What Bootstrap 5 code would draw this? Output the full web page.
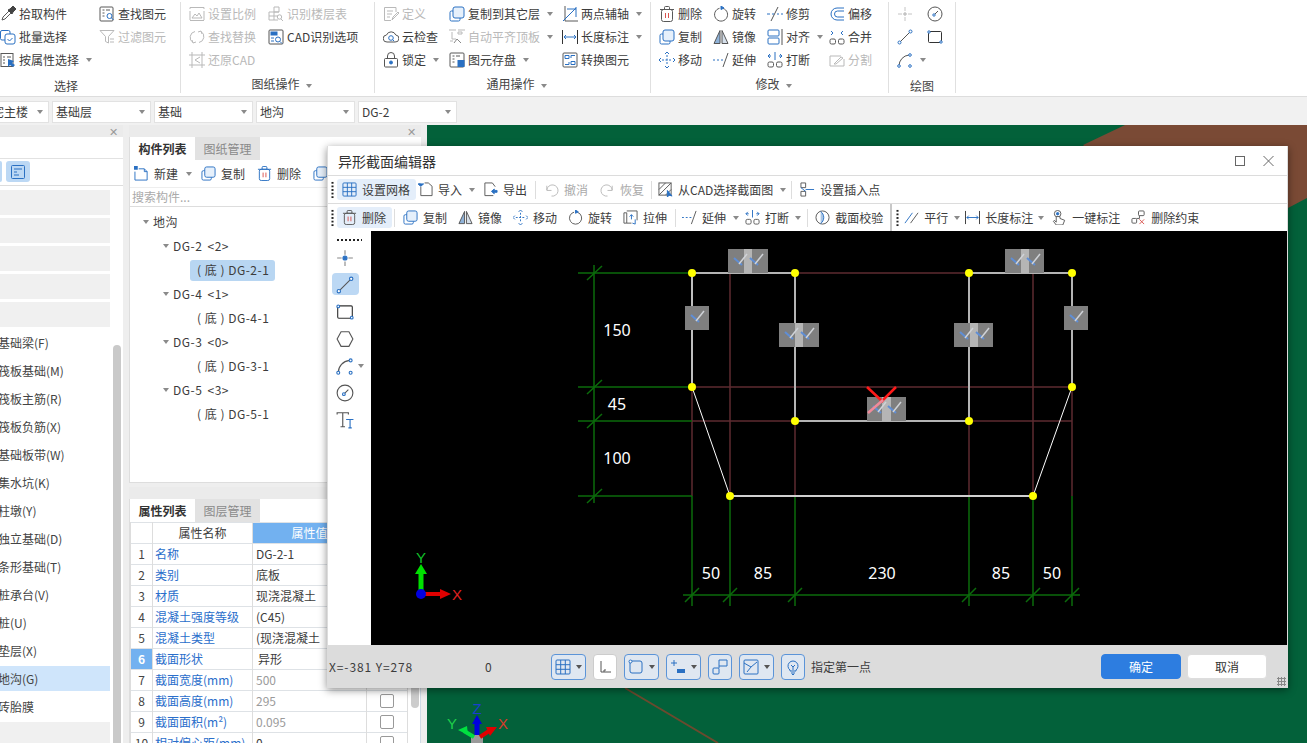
<!DOCTYPE html>
<html lang="zh-CN">
<head>
<meta charset="UTF-8">
<title>异形截面编辑器</title>
<link href="https://cdn.jsdelivr.net/npm/bootstrap@5.3.0/dist/css/bootstrap.min.css" rel="stylesheet">
<style>
html,body{margin:0;height:100%;overflow:hidden}
body{font-family:"Noto Sans CJK SC","Liberation Sans",sans-serif;font-size:12px;line-height:1;color:#3c3c3c;background:#eee}
.app{position:relative;width:1307px;height:743px;overflow:hidden}
.ic{width:16px;height:16px;flex:none;fill:none;stroke:currentColor;stroke-width:1;color:#595959}
.dis,.dis .ic{color:#b9b9b9}
.crt{display:inline-block;flex:none;width:0;height:0;border-left:3px solid transparent;border-right:3px solid transparent;border-top:4px solid #8a8a8a}

/* ribbon */
.rib{height:97px;background:#fff;border-bottom:1px solid #ddd}
.rgrp{height:91px;margin-top:2px;border-right:1px solid #e0e0e0;padding-left:8px;flex:none}
.rgrid{display:grid;grid-auto-rows:23px;align-items:center}
.ritem{display:flex;align-items:center;gap:3px;white-space:nowrap}
.ritem .crt{margin-left:4px}
.rlab{text-align:center;padding-top:7px;color:#444}
.rlab .crt{margin-left:6px;vertical-align:middle}
.g1{width:181px;padding-left:0}.g1 .rgrid{grid-template-columns:99px 1fr}.g1 .rlab{padding-right:48px;padding-top:9px}
.g2{width:194px}.g2 .rgrid{grid-template-columns:79px 1fr}
.g3{width:276px}.g3 .rgrid{grid-template-columns:66px 113px 1fr}
.g4{width:238px}.g4 .rgrid{grid-template-columns:54px 54px 62px 1fr}
.g5{width:67px}.g5 .rgrid{grid-template-columns:30px 30px}.g5 .rlab{padding-top:9px;padding-right:8px}

.selbar{height:28px;background:#f1f1f1;gap:3px;padding-top:4px}
.selbox{height:22px;width:99px;background:#fff;border:1px solid #e2e2e2;display:flex;align-items:center;justify-content:space-between;padding:0 5px 0 3px;font-size:12px;overflow:hidden;flex:none}
.selbox.first{width:49px;border-left:0;padding-left:0}
.selbox.first span{margin-left:-8px;white-space:nowrap}

/* panels */
.mainrow{height:618px}
.strip{height:12px;background:#ebebeb;display:flex;justify-content:flex-end;padding-right:5px;color:#999;font-size:11px;align-items:center}
.leftp{width:123px;background:#fff;flex:none}
.ltbar{height:49px;padding:25px 0 0 0;border-bottom:1px solid #ddd;background:#fff;position:relative;display:flex;gap:4px}
.ltbar::before{content:"";position:absolute;left:0;right:0;top:21px;border-top:1px solid #e2e2e2}
.lact{width:24px;height:21px;margin-top:-1px;background:#bcd8f4;border-radius:3px;display:flex;align-items:center;justify-content:center}
.lact.cut{width:2px;border-radius:0 3px 3px 0}
.lact .ic{color:#2a70c2}
.llist{width:110px;padding-top:4px;flex:none}
.lrow{height:25px;margin-bottom:3px;display:flex;align-items:center;white-space:nowrap;overflow:hidden;color:#444}
.lrow span{margin-left:-2px}
.lrow.ph{background:#f0f0f0}
.lrow.on{background:#cfe5fb}
.lscroll{width:8px;margin:159px 0 0 3px;height:460px;background:#c9c9c9;border-radius:4px 4px 0 0;flex:none}
.midp{width:292px;margin:0 6px;flex:none}
.tabs{height:23px;background:#fff;border-left:1px solid #ddd}
.tabx{width:65px;height:23px;display:flex;align-items:center;justify-content:center;font-size:12px}
.tabx.act{font-weight:700;color:#333;background:#fff}
.tabx.off{background:#e2e2e2;color:#8a8a8a}
.treep{height:323px;background:#fff;border:1px solid #ddd;border-top:0}
.ttool{height:27px;display:flex;align-items:center;padding-left:4px;white-space:nowrap;overflow:hidden}
.ttool .ic{color:#2a70c2}
.tsearch{height:20px;border-top:1px solid #eee;border-bottom:1px solid #ddd;display:flex;align-items:center;padding-left:2px;color:#aaa}
.tnode{height:24px;display:flex;align-items:center;gap:4px;white-space:nowrap;font-size:12px;letter-spacing:.5px}
.l0{padding-left:13px}.l1{padding-left:33px;word-spacing:2px}.l2{padding-left:60px}
.tsel{width:85px;height:21px;display:flex;align-items:center;background:#b8d6f2;border-radius:3px}
.tsel span,.l2 span{padding-left:7px;white-space:pre}
.treelist{padding-top:3px}
.prop{margin-top:4px;height:256px;background:#fff;overflow:hidden}
.proprow{height:221px;background:#fff;border-left:1px solid #ddd;border-right:1px solid #cfdbe6}
table.ptb{width:277px;table-layout:fixed;margin:0;font-size:12px;--bs-table-color:#3c3c3c}
table.ptb th,table.ptb td{height:21px;padding:0 3px;vertical-align:middle;border-color:#ddd;white-space:nowrap;overflow:hidden;line-height:1}
table.ptb th{font-weight:400;text-align:center}
.pc1{width:22px}.pc2{width:100px}.pc3{width:114px}.pc4{width:41px}
.th-blue{--bs-table-bg:#72b1f0;color:#fff!important}
.cnum{text-align:center;color:#444}
.cnum.on{--bs-table-bg:#72b1f0;color:#fff!important;font-weight:700}
table.ptb td.cname{color:#2a6ecb!important;padding-left:2px}
.cgrey{color:#9b9b9b!important}
.cedit{box-shadow:inset 0 0 0 1px #5b9bd5;padding-left:5px!important}
.cck{text-align:center}
.cck .form-check-input{margin:0;width:14px;height:14px;vertical-align:middle;border-color:#999;border-radius:2px}
.pscroll{width:8px;height:148px;margin:38px 0 0 3px;background:#ccc;border-radius:4px;flex:none}
.canv{flex:1 1 auto;background:#03613a;overflow:hidden}
.canv svg{display:block}

/* dialog */
.dlg{position:absolute;left:327px;top:146px;width:961px;height:542px;background:#dcdcdc;box-shadow:0 2px 8px rgba(0,0,0,.45);display:flex;flex-direction:column;padding:0 1px 0 1px}
.dtitle{height:29px;background:#fff;display:flex;align-items:center;padding-left:10px;font-size:14px;color:#333;flex:none}
.dbtns{margin-left:auto;display:flex;gap:18px;padding-right:13px}
.dtb{height:27px;background:#fff;display:flex;align-items:center;white-space:nowrap;flex:none;padding-left:3px}
.dtb1{margin-top:1px}
.dtb2{margin-top:1px}
.grip{width:3px;height:18px;flex:none;background-image:radial-gradient(circle,#222 1px,transparent 1.2px);background-size:3px 3.6px}
.ti{display:flex;align-items:center;gap:5px;flex:none}
.ti .ic{width:15px;height:15px}
.ti.on{background:#e4eefa;border-radius:3px;padding:0 6px 0 5px;height:21px}
.dis.ti{color:#aaa}
.vs{width:1px;height:18px;background:#ddd;flex:none}
.vs2{width:2px;height:27px;background:#c8c8c8;flex:none}
.ml2{margin-left:2px}.ml3{margin-left:3px}.ml4{margin-left:4px}.ml5{margin-left:5px}.ml6{margin-left:6px}.ml7{margin-left:7px}.ml8{margin-left:8px}.ml9{margin-left:9px}.ml11{margin-left:11px}.ml12{margin-left:12px}
.dbody{height:414px;flex:none}
.tcol{width:43px;background:#fff;flex:none;padding-top:8px}
.tdots{width:26px;height:2px;margin:0 0 3px 8px;background-image:radial-gradient(circle,#222 1px,transparent 1.1px);background-size:4px 2px}
.tc{height:27px;display:flex;align-items:center;justify-content:center;position:relative}
.tc.on::before{content:"";position:absolute;left:4px;top:2px;width:27px;height:22px;background:#bcd8f4;border-radius:4px}
.tc .ic{position:relative;margin-right:9px;width:18px;height:18px}
.tc .crt{position:absolute;left:30px;top:12px}
.dcad{display:block;background:#000}
.dstat{height:43px;display:flex;align-items:center;flex:none;padding-left:1px;padding-right:20px;color:#3c3c3c}
.scoord{width:156px;letter-spacing:.9px}
.szero{width:66px}
.sb{height:26px;display:flex;align-items:center;justify-content:center;gap:5px;border:1px solid #5b94d8;border-radius:4px;background:#dfe7f1;flex:none}
.sb .ic{color:#2a70c2}
.sb.wh{background:#fff;border-color:#ccc}.sb.wh .ic{color:#555}
.sb .crt{border-top-color:#555}
.w35{width:35px}.w24{width:24px}
.sbs{gap:7px}
.dbtn.btn{width:80px;height:25px;padding:0;font-size:12px;border-radius:4px;line-height:1}
.dbtn.btn-primary{--bs-btn-bg:#2d7de0;--bs-btn-border-color:#2d7de0}
.dbtn.btn-light{--bs-btn-bg:#fff;--bs-btn-border-color:#ddd;color:#333;margin-left:6px}
.rgrip{position:absolute;right:2px;bottom:2px;width:9px;height:9px;background-image:radial-gradient(circle,#888 1px,transparent 1.1px);background-size:3px 3px}
</style>
</head>
<body>
<svg class="d-none">
<symbol id="i-pick" viewBox="0 0 16 16"><path d="M2 14l1-3 6-6 2 2-6 6z"/><path d="M8 4l2-1 3-3 3 3-3 3-1 2z" fill="#444" stroke="#444"/></symbol>
<symbol id="i-batch" viewBox="0 0 16 16"><g stroke="#2a70c2"><path d="M5 11H2a1.500 1.500 0 0 1-1.500-1.500V3A1.500 1.500 0 0 1 2 1.500h6.500A1.500 1.500 0 0 1 10 3v2"/><rect x="5" y="5" width="10" height="10" rx="2"/><path d="M7.500 10l2 2 3-3"/></g></symbol>
<symbol id="i-attr" viewBox="0 0 16 16"><rect x="1" y="1.500" width="12" height="13"/><path d="M3 5h2M7 5h4M3 8h2M3 11h2"/><path d="M8 7v8l2-2 3 2 2-2-3-2 2-2z" fill="#2a70c2" stroke="none"/></symbol>
<symbol id="i-find" viewBox="0 0 16 16"><rect x="1" y="1" width="13" height="14" rx="1"/><path d="M3.500 4h2M7 4h4M3.500 7h2M3.500 10h2"/><g stroke="#2a70c2"><circle cx="10.500" cy="10" r="2.500" fill="#fff"/><path d="M12.500 12l2 2"/></g></symbol>
<symbol id="i-filter" viewBox="0 0 16 16"><path d="M1 1.500h14l-5.500 6v6.500l-3-1.500v-5z"/><path d="M11 10h4M11 13h4"/></symbol>
<symbol id="i-scale" viewBox="0 0 16 16"><path d="M1 3V1.500h14V3M1 14v-9M15 14V5M1 14.500h14"/><path d="M3 12l3-4 2 2 2-3 3 5z"/></symbol>
<symbol id="i-rep" viewBox="0 0 16 16"><path d="M6 2.500a6 6 0 0 0-2 11M10 13.500a6 6 0 0 0 2-11M3 11l1 3 3-1M13 5l-1-3-3 1"/></symbol>
<symbol id="i-res" viewBox="0 0 16 16"><path d="M0 3h16M0 13h16M3 0v16M13 0v16M11 5L6 8l5 3"/></symbol>
<symbol id="i-floor" viewBox="0 0 16 16"><path d="M6 1h5v5H6zM1 6h10M1 6v8h9M1 10h9M6 6v8"/><circle cx="11.500" cy="11" r="2.200"/><path d="M13 13l2 2"/></symbol>
<symbol id="i-cad" viewBox="0 0 16 16"><rect x="1" y="1" width="14" height="14" rx="1" stroke="#555"/><rect x="2.500" y="2.500" width="7" height="4" fill="#2a70c2" stroke="none"/><g stroke="#2a70c2"><circle cx="10" cy="10.500" r="2.500"/><path d="M12 12.500l2 2M3 9h3M3 12h3"/></g></symbol>
<symbol id="i-def" viewBox="0 0 16 16"><path d="M13 6V1.500H1.500v13H8M4 5h6M4 8h5M4 11h3M9 14l1-3 5-5 1 1-5 5z"/></symbol>
<symbol id="i-cloud" viewBox="0 0 16 16"><path d="M4 13a3.500 3.500 0 0 1-.5-7A5 5 0 0 1 12.800 6 3.500 3.500 0 0 1 12 13z" stroke="#555"/><g stroke="#2a70c2"><circle cx="8" cy="9" r="2.300"/><path d="M9.700 10.700l1.500 1.500"/></g></symbol>
<symbol id="i-lock" viewBox="0 0 16 16"><rect x="1.500" y="6.500" width="13" height="8.500" rx="1" stroke="#555"/><path d="M4.500 6.500V4a3.500 3.500 0 0 1 7 0v2.500" stroke="#555"/><circle cx="8" cy="10.500" r="1.500" fill="#2a70c2" stroke="#2a70c2"/></symbol>
<symbol id="i-copy" viewBox="0 0 16 16"><g stroke="#2a70c2"><path d="M4 5H2.500A1.500 1.500 0 0 0 1 6.500v7A1.500 1.500 0 0 0 2.500 15h7a1.500 1.500 0 0 0 1.500-1.500V12"/><rect x="4" y="1" width="11" height="11" rx="2" fill="#e6f0fb"/></g></symbol>
<symbol id="i-align" viewBox="0 0 16 16"><path d="M0 1h7M9 1h7M3 3v7h4M9 3h4v2h-4zM1 12h3"/><path d="M5 14l3-4 4 4" stroke="#888"/></symbol>
<symbol id="i-save" viewBox="0 0 16 16"><rect x="1" y="1" width="14" height="14" rx="1"/><path d="M3.500 4h2M7 4h4M3.500 7h2M3.500 10h2"/><rect x="9" y="8.500" width="6" height="6" fill="#2a70c2" stroke="#2a70c2"/></symbol>
<symbol id="i-axis" viewBox="0 0 16 16"><path d="M3 0v15h13"/><path d="M1 15L14 2M14 1v10M5 3h9" stroke="#2a70c2"/></symbol>
<symbol id="i-len" viewBox="0 0 16 16"><path d="M.500 1v14M15.500 1v14" stroke="#333"/><path d="M2 8h12M4 6L2 8l2 2M12 6l2 2-2 2" stroke="#2a70c2"/></symbol>
<symbol id="i-conv" viewBox="0 0 16 16"><rect x="1" y="1" width="14" height="14" rx="1"/><path d="M3 3.500h4v3H3zM9 9.500h4v3H9zM9 6V3.500h4M7 10v2.500H3" stroke="#2a70c2"/></symbol>
<symbol id="i-del" viewBox="0 0 16 16"><rect x="2.500" y="3.500" width="11" height="12" rx="2"/><path d="M1 3.500h14M5.500 3.500v-2a1 1 0 0 1 1-1h3a1 1 0 0 1 1 1v2"/><path d="M6.500 7v5M9.500 7v5" stroke="#d9534f"/></symbol>
<symbol id="i-rot" viewBox="0 0 16 16"><path d="M6.500 2.300a6.500 6.500 0 1 0 3.500.1"/><path d="M8 0l3 2-3 1.500z" fill="#2a70c2" stroke="#2a70c2"/></symbol>
<symbol id="i-trim" viewBox="0 0 16 16"><path d="M4 15L11 1" stroke="#555"/><path d="M0 8h3M5 8h2M10 8h2M14 8h2" stroke="#2a70c2"/></symbol>
<symbol id="i-off" viewBox="0 0 16 16"><path d="M15 2H8a5.500 5.500 0 0 0 0 12h7M15 5H8.500a2.500 2.500 0 0 0 0 6H15" stroke="#2a70c2"/></symbol>
<symbol id="i-mir" viewBox="0 0 16 16"><path d="M7 1.500L1 14.500h6z" fill="#8fb2d8" stroke="#555"/><path d="M9 1.500l6 13H9z" fill="#d5dfea" stroke="#555"/></symbol>
<symbol id="i-ali" viewBox="0 0 16 16"><g stroke="#2a70c2"><rect x="1" y="1" width="11" height="6" rx="1"/><rect x="1" y="9" width="11" height="6" rx="1"/></g><path d="M15 0v16" stroke="#555"/></symbol>
<symbol id="i-merge" viewBox="0 0 16 16"><rect x="1" y="10" width="5.500" height="5" rx="1.500"/><rect x="9.500" y="10" width="5.500" height="5" rx="1.500"/><path d="M2 2l2 2-2 2M14 2l-2 2 2 2" stroke="#2a70c2"/></symbol>
<symbol id="i-move" viewBox="0 0 16 16"><g stroke="#2a70c2"><path d="M8 3v10M3 8h10" stroke-dasharray="2 1.500"/><path d="M6 2l2-2 2 2M6 14l2 2 2-2M2 6L0 8l2 2M14 6l2 2-2 2"/></g></symbol>
<symbol id="i-ext" viewBox="0 0 16 16"><path d="M0 8h2M4 8h2M8 8h2" stroke="#2a70c2"/><path d="M10 15l5-14"/></symbol>
<symbol id="i-brk" viewBox="0 0 16 16"><rect x="1" y="10" width="5.500" height="5" rx="1.500"/><rect x="9.500" y="10" width="5.500" height="5" rx="1.500"/><path d="M1 4h3M3 2L1 4l2 2M15 4h-3M13 2l2 2-2 2M8 0v8" stroke="#2a70c2"/></symbol>
<symbol id="i-split" viewBox="0 0 16 16"><path d="M12 4H1v10h14V7M5 12l7-7 2 1-7 6z"/></symbol>
<symbol id="i-pt" viewBox="0 0 16 16"><path d="M1 8h4M11 8h4M8 1v4M8 11v4" stroke="#888"/><circle cx="8" cy="8" r="1.800" fill="#2a70c2" stroke="#2a70c2"/></symbol>
<symbol id="i-pt2" viewBox="0 0 16 16"><path d="M1 8h4M11 8h4M8 1v4M8 11v4" stroke="#c4c4c4"/><circle cx="8" cy="8" r="1.300" fill="#c4c4c4" stroke="#c4c4c4"/></symbol>
<symbol id="i-line" viewBox="0 0 16 16"><path d="M3 13L13 3" stroke="#555"/><g stroke="#2a70c2" fill="#fff"><circle cx="2.500" cy="13.500" r="1.500"/><circle cx="13.500" cy="2.500" r="1.500"/></g></symbol>
<symbol id="i-rect" viewBox="0 0 16 16"><rect x="1.500" y="2.500" width="13" height="11" rx="1" stroke="#333"/><g fill="#fff" stroke="#2a70c2"><circle cx="2" cy="3" r="1.200"/><circle cx="14" cy="13" r="1.200"/></g></symbol>
<symbol id="i-hex" viewBox="0 0 16 16"><path d="M1 8l3.500-6.500h7L15 8l-3.500 6.500h-7z" stroke="#555"/></symbol>
<symbol id="i-arc" viewBox="0 0 16 16"><path d="M2 14A11 11 0 0 1 12 3" stroke="#555"/><g stroke="#2a70c2" fill="#fff"><circle cx="2" cy="14" r="1.300"/><circle cx="13" cy="3" r="1.300"/><circle cx="13" cy="14" r="1.300"/></g></symbol>
<symbol id="i-circ" viewBox="0 0 16 16"><circle cx="8" cy="8" r="7" stroke="#555"/><path d="M7 9l4-4" stroke="#555"/><circle cx="7" cy="9" r="1.200" stroke="#2a70c2" fill="#fff"/></symbol>
<symbol id="i-text" viewBox="0 0 16 16"><path d="M1 3V1.500h10V3M6 1.500V14M4 14h4" stroke="#555"/><path d="M9 7.500h6.500M12.500 7.500V15M11 15h3" stroke="#2a70c2"/></symbol>
<symbol id="i-grid" viewBox="0 0 16 16"><g stroke="#2a70c2"><rect x="1" y="1" width="14" height="14" rx="1"/><path d="M1 5.700h14M1 10.300h14M5.700 1v14M10.300 1v14"/></g></symbol>
<symbol id="i-imp" viewBox="0 0 16 16"><path d="M3 5v9.500h12v-10L11 1H7"/><path d="M0 2l3 2.500 3-2.500-3 0zM2 1v3" fill="#2a70c2" stroke="#2a70c2"/></symbol>
<symbol id="i-exp" viewBox="0 0 16 16"><path d="M13 5L10 1H2v13.500h9"/><path d="M9 10l3-2.500v1.500h3v2h-3v1.500z" fill="#2a70c2" stroke="#2a70c2"/></symbol>
<symbol id="i-undo" viewBox="0 0 16 16"><path d="M3 4v5h5M3 8.500A6 6 0 1 1 8 15"/></symbol>
<symbol id="i-redo" viewBox="0 0 16 16"><path d="M13 4v5H8M13 8.500A6 6 0 1 0 8 15"/></symbol>
<symbol id="i-fcad" viewBox="0 0 16 16"><rect x="1" y="1" width="13" height="13"/><path d="M1 8l7-7M1 14L14 1M8 14l6-6" stroke="#555"/><path d="M10 9v7l2-2 3 1z" fill="#2a70c2" stroke="#2a70c2"/></symbol>
<symbol id="i-ins" viewBox="0 0 16 16"><path d="M1 1h5v5H1zM1 10h5v5H1z"/><path d="M6 8h9M1 6l5 4" stroke="#2a70c2"/></symbol>
<symbol id="i-str" viewBox="0 0 16 16"><path d="M4 1h11v10M1 3h3v11H1zM4 14h5"/><path d="M9 5v5M7 7l2-2 2 2M13 15l-3-1M13 10v5" stroke="#2a70c2"/></symbol>
<symbol id="i-chk" viewBox="0 0 16 16"><circle cx="8" cy="8" r="7" stroke="#555"/><path d="M6 1.500a8 8 0 0 1 0 13" fill="#a9c5e4" stroke="#2a70c2"/></symbol>
<symbol id="i-par" viewBox="0 0 16 16"><path d="M1 14L9 3" stroke="#2a70c2"/><path d="M7 14L15 3" stroke="#555"/></symbol>
<symbol id="i-one" viewBox="0 0 16 16"><circle cx="6" cy="4" r="3.500"/><circle cx="6" cy="4" r="1.300" fill="#2a70c2" stroke="#2a70c2"/><path d="M4.500 7v6l-2-2-1 1 3 4h7l2-5-5-2V7z" fill="#fff"/></symbol>
<symbol id="i-dcon" viewBox="0 0 16 16"><rect x="1" y="9" width="5" height="5" rx="1"/><rect x="8" y="1" width="6" height="5" rx="1"/><path d="M9 6v3H6"/><path d="M9 10l5 5M14 10l-5 5" stroke="#d9534f"/></symbol>
<symbol id="i-new" viewBox="0 0 16 16"><path d="M5 3h6l3 3v9H1V6"/><path d="M11 3v3h3"/><rect x="0" y="0" width="4" height="4" fill="#2a70c2" stroke="none"/></symbol>
<symbol id="i-list" viewBox="0 0 16 16"><rect x="1.500" y="1.500" width="13" height="13" rx="1"/><path d="M4 5h8M4 8h3M4 11h5"/></symbol>
<symbol id="i-l" viewBox="0 0 16 16"><path d="M4 2v11h10M7 13v-2h2"/></symbol>
<symbol id="i-snap" viewBox="0 0 16 16"><rect x="2" y="2" width="12" height="12" rx="2"/><circle cx="2.500" cy="2.500" r="1.500" fill="#fff"/></symbol>
<symbol id="i-plus" viewBox="0 0 16 16"><path d="M1 4h6M4 1v6"/><rect x="7" y="10" width="8" height="4" fill="#2a70c2" stroke="none"/></symbol>
<symbol id="i-lnk" viewBox="0 0 16 16"><rect x="1" y="9" width="6" height="6" rx="1"/><path d="M7 7V1h8v6H7v2"/></symbol>
<symbol id="i-tick" viewBox="0 0 16 16"><rect x="1" y="1" width="14" height="14" rx="1"/><path d="M1 4l7 4-4 5M8 8l6-5"/></symbol>
<symbol id="i-bulb" viewBox="0 0 16 16"><path d="M5 11a5 5 0 1 1 6 0v1H5zM6 14h4M7 15.500h2M6 6l2 2 2-2M8 8v3"/></symbol>
<symbol id="k" viewBox="0 0 24 24"><path d="M6 9l8 7" stroke="#5f8ed6" stroke-width="2" fill="none"/><path d="M11 15l8-10" stroke="#d0d3d8" stroke-width="1.500" fill="none"/></symbol>
</svg>

<div class="app">
  <div class="rib d-flex">
    <div class="rgrp g1">
      <div class="rgrid">
        <div class="ritem"><svg class="ic"><use href="#i-pick"/></svg>拾取构件</div>
        <div class="ritem"><svg class="ic"><use href="#i-find"/></svg>查找图元</div>
        <div class="ritem"><svg class="ic"><use href="#i-batch"/></svg>批量选择</div>
        <div class="ritem dis"><svg class="ic"><use href="#i-filter"/></svg>过滤图元</div>
        <div class="ritem"><svg class="ic"><use href="#i-attr"/></svg>按属性选择<span class="crt"></span></div>
        <div></div>
      </div>
      <div class="rlab">选择</div>
    </div>
    <div class="rgrp g2">
      <div class="rgrid">
        <div class="ritem dis"><svg class="ic"><use href="#i-scale"/></svg>设置比例</div>
        <div class="ritem dis"><svg class="ic"><use href="#i-floor"/></svg>识别楼层表</div>
        <div class="ritem dis"><svg class="ic"><use href="#i-rep"/></svg>查找替换</div>
        <div class="ritem"><svg class="ic"><use href="#i-cad"/></svg>CAD识别选项</div>
        <div class="ritem dis"><svg class="ic"><use href="#i-res"/></svg>还原CAD</div>
        <div></div>
      </div>
      <div class="rlab">图纸操作<span class="crt"></span></div>
    </div>
    <div class="rgrp g3">
      <div class="rgrid">
        <div class="ritem dis"><svg class="ic"><use href="#i-def"/></svg>定义</div>
        <div class="ritem"><svg class="ic"><use href="#i-copy"/></svg>复制到其它层<span class="crt"></span></div>
        <div class="ritem"><svg class="ic"><use href="#i-axis"/></svg>两点辅轴<span class="crt"></span></div>
        <div class="ritem"><svg class="ic"><use href="#i-cloud"/></svg>云检查</div>
        <div class="ritem dis"><svg class="ic"><use href="#i-align"/></svg>自动平齐顶板<span class="crt"></span></div>
        <div class="ritem"><svg class="ic"><use href="#i-len"/></svg>长度标注<span class="crt"></span></div>
        <div class="ritem"><svg class="ic"><use href="#i-lock"/></svg>锁定<span class="crt"></span></div>
        <div class="ritem"><svg class="ic"><use href="#i-save"/></svg>图元存盘<span class="crt"></span></div>
        <div class="ritem"><svg class="ic"><use href="#i-conv"/></svg>转换图元</div>
      </div>
      <div class="rlab">通用操作<span class="crt"></span></div>
    </div>
    <div class="rgrp g4">
      <div class="rgrid">
        <div class="ritem"><svg class="ic"><use href="#i-del"/></svg>删除</div>
        <div class="ritem"><svg class="ic"><use href="#i-rot"/></svg>旋转</div>
        <div class="ritem"><svg class="ic"><use href="#i-trim"/></svg>修剪</div>
        <div class="ritem"><svg class="ic"><use href="#i-off"/></svg>偏移</div>
        <div class="ritem"><svg class="ic"><use href="#i-copy"/></svg>复制</div>
        <div class="ritem"><svg class="ic"><use href="#i-mir"/></svg>镜像</div>
        <div class="ritem"><svg class="ic"><use href="#i-ali"/></svg>对齐<span class="crt"></span></div>
        <div class="ritem"><svg class="ic"><use href="#i-merge"/></svg>合并</div>
        <div class="ritem"><svg class="ic"><use href="#i-move"/></svg>移动</div>
        <div class="ritem"><svg class="ic"><use href="#i-ext"/></svg>延伸</div>
        <div class="ritem"><svg class="ic"><use href="#i-brk"/></svg>打断</div>
        <div class="ritem dis"><svg class="ic"><use href="#i-split"/></svg>分割</div>
      </div>
      <div class="rlab">修改<span class="crt"></span></div>
    </div>
    <div class="rgrp g5">
      <div class="rgrid">
        <div class="ritem"><svg class="ic"><use href="#i-pt2"/></svg></div>
        <div class="ritem"><svg class="ic"><use href="#i-circ"/></svg></div>
        <div class="ritem"><svg class="ic"><use href="#i-line"/></svg></div>
        <div class="ritem"><svg class="ic"><use href="#i-rect"/></svg></div>
        <div class="ritem"><svg class="ic"><use href="#i-arc"/></svg><span class="crt"></span></div>
      </div>
      <div class="rlab">绘图</div>
    </div>
  </div>

  <div class="selbar d-flex">
    <div class="selbox first"><span>宅主楼</span><i class="crt"></i></div>
    <div class="selbox"><span>基础层</span><i class="crt"></i></div>
    <div class="selbox"><span>基础</span><i class="crt"></i></div>
    <div class="selbox"><span>地沟</span><i class="crt"></i></div>
    <div class="selbox"><span>DG-2</span><i class="crt"></i></div>
  </div>

  <div class="mainrow d-flex">
    <div class="leftp">
      <div class="strip">✕</div>
      <div class="ltbar"><div class="lact cut"></div><div class="lact"><svg class="ic"><use href="#i-list"/></svg></div></div>
      <div class="d-flex">
        <div class="llist">
          <div class="lrow ph"></div><div class="lrow ph"></div><div class="lrow ph"></div><div class="lrow ph"></div><div class="lrow ph"></div>
          <div class="lrow"><span>基础梁(F)</span></div>
          <div class="lrow"><span>筏板基础(M)</span></div>
          <div class="lrow"><span>筏板主筋(R)</span></div>
          <div class="lrow"><span>筏板负筋(X)</span></div>
          <div class="lrow"><span>基础板带(W)</span></div>
          <div class="lrow"><span>集水坑(K)</span></div>
          <div class="lrow"><span>柱墩(Y)</span></div>
          <div class="lrow"><span>独立基础(D)</span></div>
          <div class="lrow"><span>条形基础(T)</span></div>
          <div class="lrow"><span>桩承台(V)</span></div>
          <div class="lrow"><span>桩(U)</span></div>
          <div class="lrow"><span>垫层(X)</span></div>
          <div class="lrow on"><span>地沟(G)</span></div>
          <div class="lrow"><span>砖胎膜</span></div>
          <div class="lrow ph"></div>
        </div>
        <div class="lscroll"></div>
      </div>
    </div>

    <div class="midp">
      <div class="strip">✕</div>
      <div class="tabs d-flex"><div class="tabx act">构件列表</div><div class="tabx off">图纸管理</div></div>
      <div class="treep">
        <div class="ttool">
          <div class="ti"><svg class="ic"><use href="#i-new"/></svg>新建</div><span class="crt ml8"></span>
          <div class="ti ml9"><svg class="ic"><use href="#i-copy"/></svg>复制</div>
          <div class="ti ml12"><svg class="ic"><use href="#i-del"/></svg>删除</div>
          <div class="ti ml12"><svg class="ic"><use href="#i-copy"/></svg></div>
        </div>
        <div class="tsearch">搜索构件...</div>
        <div class="treelist">
          <div class="tnode l0"><span class="crt"></span><span>地沟</span></div>
          <div class="tnode l1"><span class="crt"></span><span>DG-2 &lt;2&gt;</span></div>
          <div class="tnode l2"><div class="tsel"><span>( 底 ) DG-2-1</span></div></div>
          <div class="tnode l1"><span class="crt"></span><span>DG-4 &lt;1&gt;</span></div>
          <div class="tnode l2"><span>( 底 ) DG-4-1</span></div>
          <div class="tnode l1"><span class="crt"></span><span>DG-3 &lt;0&gt;</span></div>
          <div class="tnode l2"><span>( 底 ) DG-3-1</span></div>
          <div class="tnode l1"><span class="crt"></span><span>DG-5 &lt;3&gt;</span></div>
          <div class="tnode l2"><span>( 底 ) DG-5-1</span></div>
        </div>
      </div>
      <div class="prop">
        <div class="strip"></div>
        <div class="tabs d-flex"><div class="tabx act">属性列表</div><div class="tabx off">图层管理</div></div>
        <div class="proprow d-flex">
          <table class="table table-bordered ptb">
            <colgroup><col class="pc1"><col class="pc2"><col class="pc3"><col class="pc4"></colgroup>
            <thead><tr><th></th><th>属性名称</th><th class="th-blue">属性值</th><th>附加</th></tr></thead>
            <tbody>
              <tr><td class="cnum">1</td><td class="cname">名称</td><td>DG-2-1</td><td class="cck"></td></tr>
              <tr><td class="cnum">2</td><td class="cname">类别</td><td>底板</td><td class="cck"><input class="form-check-input" type="checkbox"></td></tr>
              <tr><td class="cnum">3</td><td class="cname">材质</td><td>现浇混凝土</td><td class="cck"><input class="form-check-input" type="checkbox"></td></tr>
              <tr><td class="cnum">4</td><td class="cname">混凝土强度等级</td><td>(C45)</td><td class="cck"><input class="form-check-input" type="checkbox"></td></tr>
              <tr><td class="cnum">5</td><td class="cname">混凝土类型</td><td>(现浇混凝土</td><td class="cck"><input class="form-check-input" type="checkbox"></td></tr>
              <tr><td class="cnum on">6</td><td class="cname">截面形状</td><td class="cedit">异形</td><td class="cck"><input class="form-check-input" type="checkbox"></td></tr>
              <tr><td class="cnum">7</td><td class="cname">截面宽度(mm)</td><td class="cgrey">500</td><td class="cck"><input class="form-check-input" type="checkbox"></td></tr>
              <tr><td class="cnum">8</td><td class="cname">截面高度(mm)</td><td class="cgrey">295</td><td class="cck"><input class="form-check-input" type="checkbox"></td></tr>
              <tr><td class="cnum">9</td><td class="cname">截面面积(m²)</td><td class="cgrey">0.095</td><td class="cck"><input class="form-check-input" type="checkbox"></td></tr>
              <tr><td class="cnum">10</td><td class="cname">相对偏心距(mm)</td><td>0</td><td class="cck"><input class="form-check-input" type="checkbox"></td></tr>
            </tbody>
          </table>
          <div class="pscroll"></div>
        </div>
      </div>
    </div>

    <div class="canv">
      <svg width="880" height="618" viewBox="427 125 880 618">
        <polygon points="1125,125 1307,125 1307,198 1288,208 1150,208 1083,145" fill="#7a4a35"/>
        <path d="M625 688L718 743" stroke="#6b4a2e" stroke-width="2" fill="none"/>
        <rect x="471" y="735" width="12" height="8" fill="#9a9a9a"/>
        <path d="M477 735V720" stroke="#0000e0" stroke-width="5"/><path d="M472 724l5-9 5 9z" fill="#0000e0"/>
        <text x="477" y="714" fill="#1a3fd0" font-size="15" text-anchor="middle" font-family="Liberation Sans">Z</text>
        <path d="M474 737l-10-6" stroke="#00e040" stroke-width="4"/><path d="M458 730l9-4 1 9z" fill="#00e040"/>
        <text x="452" y="729" fill="#1fd04a" font-size="15" text-anchor="middle" font-family="Liberation Sans">Y</text>
        <path d="M480 737l9-6" stroke="#e00000" stroke-width="4"/><path d="M486 727h11l-7 9z" fill="#e00000"/>
        <text x="503" y="729" fill="#d83a2a" font-size="15" text-anchor="middle" font-family="Liberation Sans">X</text>
      </svg>
    </div>
  </div>

  <div class="dlg">
    <div class="dtitle">异形截面编辑器
      <div class="dbtns">
        <svg width="10" height="10" fill="none" stroke="#666"><rect x=".5" y=".5" width="9" height="9"/></svg>
        <svg width="11" height="10" fill="none" stroke="#666"><path d="M.5 0l10 10M10.500 0l-10 10"/></svg>
      </div>
    </div>
    <div class="dtb dtb1">
      <span class="grip"></span>
      <div class="ti on ml3"><svg class="ic"><use href="#i-grid"/></svg>设置网格</div>
      <div class="ti ml2"><svg class="ic"><use href="#i-imp"/></svg>导入</div><span class="crt ml7"></span>
      <div class="ti ml8"><svg class="ic"><use href="#i-exp"/></svg>导出</div>
      <span class="vs ml8"></span>
      <div class="ti dis ml8"><svg class="ic"><use href="#i-undo"/></svg>撤消</div>
      <div class="ti dis ml12"><svg class="ic"><use href="#i-redo"/></svg>恢复</div>
      <span class="vs ml7"></span>
      <div class="ti ml6"><svg class="ic"><use href="#i-fcad"/></svg>从CAD选择截面图</div><span class="crt ml7"></span>
      <span class="vs ml5"></span>
      <div class="ti ml8"><svg class="ic"><use href="#i-ins"/></svg>设置插入点</div>
    </div>
    <div class="dtb dtb2">
      <span class="grip"></span>
      <div class="ti on ml3"><svg class="ic"><use href="#i-del"/></svg>删除</div>
      <span class="vs ml2"></span>
      <div class="ti ml8"><svg class="ic"><use href="#i-copy"/></svg>复制</div>
      <div class="ti ml11"><svg class="ic"><use href="#i-mir"/></svg>镜像</div>
      <div class="ti ml11"><svg class="ic"><use href="#i-move"/></svg>移动</div>
      <div class="ti ml11"><svg class="ic"><use href="#i-rot"/></svg>旋转</div>
      <div class="ti ml11"><svg class="ic"><use href="#i-str"/></svg>拉伸</div>
      <span class="vs ml8"></span>
      <div class="ti ml6"><svg class="ic"><use href="#i-ext"/></svg>延伸</div><span class="crt ml7"></span>
      <div class="ti ml6"><svg class="ic"><use href="#i-brk"/></svg>打断</div><span class="crt ml6"></span>
      <span class="vs ml6"></span>
      <div class="ti ml7"><svg class="ic"><use href="#i-chk"/></svg>截面校验</div>
      <span class="vs2 ml7"></span>
      <span class="grip ml4"></span>
      <div class="ti ml5"><svg class="ic"><use href="#i-par"/></svg>平行</div><span class="crt ml6"></span>
      <div class="ti ml5"><svg class="ic"><use href="#i-len"/></svg>长度标注</div><span class="crt ml5"></span>
      <div class="ti ml8"><svg class="ic"><use href="#i-one"/></svg>一键标注</div>
      <div class="ti ml11"><svg class="ic"><use href="#i-dcon"/></svg>删除约束</div>
    </div>
    <div class="dbody d-flex">
      <div class="tcol">
        <div class="tdots"></div>
        <div class="tc"><svg class="ic"><use href="#i-pt"/></svg></div>
        <div class="tc on"><svg class="ic"><use href="#i-line"/></svg></div>
        <div class="tc"><svg class="ic"><use href="#i-rect"/></svg></div>
        <div class="tc"><svg class="ic"><use href="#i-hex"/></svg></div>
        <div class="tc"><svg class="ic"><use href="#i-arc"/></svg><span class="crt"></span></div>
        <div class="tc"><svg class="ic"><use href="#i-circ"/></svg></div>
        <div class="tc"><svg class="ic"><use href="#i-text"/></svg></div>
      </div>
      <svg class="dcad" width="916" height="414" viewBox="371 231 916 414" fill="none">
        <!-- grid -->
        <g stroke="#5e2b30" stroke-width="1.500">
          <path d="M795 273H969M692 387H1072M692 421H1072"/>
          <path d="M692 387V496M730 273V496M795 421V496M969 421V496M1033 273V496M1072 387V496"/>
        </g>
        <!-- dimensions -->
        <g stroke="#0b6b0b" stroke-width="1.500">
          <path d="M578 273H692M578 387H692M578 421H692M578 496H692M594 265V503"/>
          <path d="M587 280L602 266M587 394L602 380M587 428L602 414M587 503L602 489"/>
          <path d="M692 496V606M730 496V606M795 496V606M969 496V606M1033 496V606M1072 496V606M683 595H1080"/>
          <path d="M685 602L699 588M723 602L737 588M788 602L802 588M962 602L976 588M1026 602L1040 588M1065 602L1079 588"/>
        </g>
        <!-- section -->
        <g stroke="#b4b4b4" stroke-width="2">
          <path d="M692 273H795V421H969V273H1072V387"/>
          <path d="M730 496H1033" stroke="#d0d0d0"/>
        </g>
        <g stroke="#fff" stroke-width="1"><path d="M692 387L730 496M1072 387L1033 496"/><path d="M692 273V387" stroke-width="1.500"/></g>
        <!-- constraints -->
        <g fill="#7f7f7f">
          <rect x="728" y="249" width="40" height="24"/><rect x="1005" y="249" width="39" height="24"/>
          <rect x="779" y="323" width="40" height="24"/><rect x="954" y="323" width="39" height="24"/>
          <rect x="867" y="397" width="39" height="24"/>
          <rect x="685" y="306" width="24" height="24"/><rect x="1064" y="306" width="24" height="24"/>
        </g>
        <g fill="#b5b5b5">
          <rect x="744" y="249" width="8" height="24"/><rect x="1021" y="249" width="8" height="24"/>
          <rect x="795" y="323" width="8" height="24"/><rect x="970" y="323" width="8" height="24"/>
          <rect x="882" y="397" width="9" height="24"/>
        </g>
        <use href="#k" x="728" y="249" width="24" height="24"/><use href="#k" x="744" y="249" width="24" height="24"/>
        <use href="#k" x="1005" y="249" width="24" height="24"/><use href="#k" x="1021" y="249" width="24" height="24"/>
        <use href="#k" x="779" y="323" width="24" height="24"/><use href="#k" x="795" y="323" width="24" height="24"/>
        <use href="#k" x="954" y="323" width="24" height="24"/><use href="#k" x="970" y="323" width="24" height="24"/>
        <use href="#k" x="867" y="397" width="24" height="24"/><use href="#k" x="882" y="397" width="24" height="24"/>
        <use href="#k" x="685" y="306" width="24" height="24"/><use href="#k" x="1064" y="306" width="24" height="24"/>
        <path d="M867 387L883 402" stroke="#ff1a1a" stroke-width="2.500"/><path d="M896 387L883 400" stroke="#ff1a1a" stroke-width="2.500"/>
        <path d="M883 400L868 413" stroke="#f08a9a" stroke-width="2.500"/>
        <!-- nodes -->
        <g fill="#ffff00">
          <circle cx="692" cy="273" r="4"/><circle cx="795" cy="273" r="4"/><circle cx="969" cy="273" r="4"/><circle cx="1072" cy="273" r="4"/>
          <circle cx="692" cy="387" r="4"/><circle cx="1072" cy="387" r="4"/><circle cx="795" cy="421" r="4"/><circle cx="969" cy="421" r="4"/>
          <circle cx="730" cy="496" r="4"/><circle cx="1033" cy="496" r="4"/>
        </g>
        <g fill="#fff" font-family="Noto Sans" font-size="16" text-anchor="middle">
          <text x="617" y="336">150</text><text x="617" y="410">45</text><text x="617" y="464">100</text>
          <text x="711" y="579">50</text><text x="763" y="579">85</text><text x="882" y="579">230</text><text x="1001" y="579">85</text><text x="1052" y="579">50</text>
        </g>
        <!-- ucs -->
        <path d="M421 590V570" stroke="#00e000" stroke-width="5"/><path d="M415 574l6-10 6 10z" fill="#00e000"/>
        <path d="M425 594H442" stroke="#e00000" stroke-width="4"/><path d="M440 589l11 5-11 5z" fill="#e00000"/>
        <circle cx="421" cy="594" r="5" fill="#0000e0"/>
        <text x="421" y="563" fill="#12c02a" font-size="15" text-anchor="middle" font-family="Liberation Sans">Y</text>
        <text x="457" y="600" fill="#e02020" font-size="15" text-anchor="middle" font-family="Liberation Sans">X</text>
      </svg>
    </div>
    <div class="dstat">
      <span class="scoord">X=-381 Y=278</span>
      <span class="szero">0</span>
      <div class="d-flex sbs">
        <div class="sb w35"><svg class="ic"><use href="#i-grid"/></svg><span class="crt"></span></div>
        <div class="sb wh w24"><svg class="ic"><use href="#i-l"/></svg></div>
        <div class="sb w35"><svg class="ic"><use href="#i-snap"/></svg><span class="crt"></span></div>
        <div class="sb w35"><svg class="ic"><use href="#i-plus"/></svg><span class="crt"></span></div>
        <div class="sb w24"><svg class="ic"><use href="#i-lnk"/></svg></div>
        <div class="sb w35"><svg class="ic"><use href="#i-tick"/></svg><span class="crt"></span></div>
        <div class="sb w24"><svg class="ic"><use href="#i-bulb"/></svg></div>
      </div>
      <span class="ml6">指定第一点</span>
      <button class="btn btn-primary dbtn ms-auto">确定</button>
      <button class="btn btn-light dbtn">取消</button>
    </div>
    <div class="rgrip"></div>
  </div>
</div>
<script src="https://cdn.jsdelivr.net/npm/bootstrap@5.3.0/dist/js/bootstrap.bundle.min.js"></script>
</body>
</html>
